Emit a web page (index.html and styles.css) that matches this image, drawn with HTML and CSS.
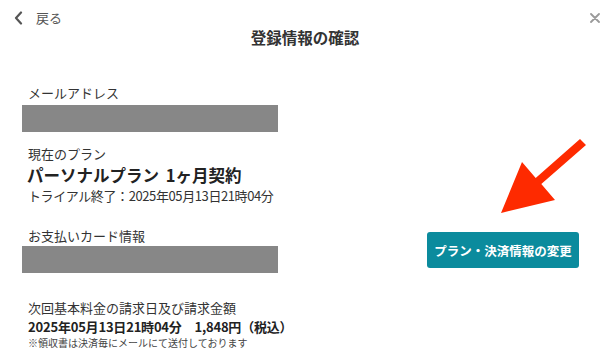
FILE: index.html
```html
<!DOCTYPE html>
<html lang="ja">
<head>
  <meta charset="UTF-8">
  <meta name="viewport" content="width=device-width, initial-scale=1.0">
  <title>登録情報の確認</title>
  <link rel="stylesheet" href="styles.css">
</head>
<body>
  <div class="page">
    <div class="topbar">
      <a class="back" href="#">
        <svg class="back-icon" width="10" height="14" viewBox="0 0 10 14">
          <path d="M7 1.5 L2 7 L7 12.5" fill="none" stroke="#555" stroke-width="2.2" stroke-linecap="round" stroke-linejoin="round"/>
        </svg>
        <span>戻る</span>
      </a>
      <button class="close" aria-label="閉じる">
        <svg width="10" height="10" viewBox="0 0 10 10">
          <path d="M1 1 L9 9 M9 1 L1 9" stroke="#9a9a9a" stroke-width="1.8" stroke-linecap="round"/>
        </svg>
      </button>
    </div>
    <h1 class="title">登録情報の確認</h1>

    <div class="main">
      <div class="info">
        <p class="label label-first">メールアドレス</p>
        <div class="masked"></div>

        <p class="label label-plan">現在のプラン</p>
        <p class="plan-name">パーソナルプラン 1ヶ月契約</p>
        <p class="label label-trial">トライアル終了：2025年05月13日21時04分</p>

        <p class="label label-card">お支払いカード情報</p>
        <div class="masked masked-card"></div>

        <p class="label label-next">次回基本料金の請求日及び請求金額</p>
        <p class="next-date">2025年05月13日21時04分　1,848円（税込）</p>
        <p class="note">※領収書は決済毎にメールにて送付しております</p>
      </div>

      <div class="actions">
        <button class="change-btn">プラン・決済情報の変更</button>
      </div>
    </div>

    <svg class="arrow" width="100" height="85" viewBox="495 135 100 85">
      <polygon points="580,139 586,145 541.3,184 555,200 501,213 522,162 535.7,178" fill="#fe2a00"/>
    </svg>
  </div>
</body>
</html>
```

FILE: styles.css
```css
body {
  margin: 0;
  padding: 0;
  background-color: #ffffff;
  font-family: "Noto Sans CJK JP", "Noto Sans", sans-serif;
  color: #333333;
}

.page {
  position: relative;
  width: 610px;
  height: 364px;
  overflow: hidden;
}

.topbar {
  display: flex;
  justify-content: space-between;
  align-items: center;
  height: 18px;
  padding: 9px 10px 0 14px;
}

.back {
  display: flex;
  align-items: center;
  gap: 12px;
  color: #555555;
  font-size: 13px;
  text-decoration: none;
  line-height: 18px;
}

.back-icon {
  display: block;
}

.close {
  border: none;
  background: none;
  padding: 0;
  width: 10px;
  height: 10px;
  display: flex;
  cursor: pointer;
}

.title {
  margin: 0;
  text-align: center;
  font-size: 15.5px;
  line-height: 20px;
  font-weight: bold;
  color: #333333;
}

.main {
  display: flex;
  padding-left: 22px;
}

.info {
  width: 256px;
}

.label {
  margin: 0;
  padding-left: 6px;
  font-size: 13px;
  line-height: 18px;
  color: #333333;
  white-space: nowrap;
}

.label-first {
  margin-top: 37px;
}

.label-plan {
  margin-top: 13px;
}

.label-trial {
  letter-spacing: -0.4px;
}

.label-card {
  margin-top: 22px;
}

.label-next {
  margin-top: 26px;
}

.masked {
  height: 27px;
  margin-top: 3px;
  background-color: #878787;
}

.masked-card {
  margin-top: 1px;
}

.plan-name {
  margin: 0;
  padding-left: 5px;
  font-size: 16.5px;
  line-height: 24px;
  font-weight: bold;
  color: #222222;
  word-spacing: 3px;
  white-space: nowrap;
}

.next-date {
  margin: 1px 0 0 0;
  padding-left: 6px;
  font-size: 13px;
  line-height: 18px;
  font-weight: bold;
  color: #222222;
  letter-spacing: -0.2px;
  white-space: nowrap;
}

.note {
  margin: 0;
  padding-left: 6px;
  font-size: 10px;
  line-height: 14px;
  color: #444444;
  white-space: nowrap;
}

.actions {
  margin-left: auto;
  padding-right: 31px;
}

.change-btn {
  margin-top: 185px;
  width: 152px;
  height: 36px;
  border: none;
  border-radius: 3px;
  background-color: #0b8b9d;
  color: #ffffff;
  font-family: "Noto Sans CJK JP", "Noto Sans", sans-serif;
  font-size: 12.5px;
  font-weight: bold;
  padding: 0;
  cursor: pointer;
}

.arrow {
  position: absolute;
  left: 495px;
  top: 135px;
  pointer-events: none;
}
```
